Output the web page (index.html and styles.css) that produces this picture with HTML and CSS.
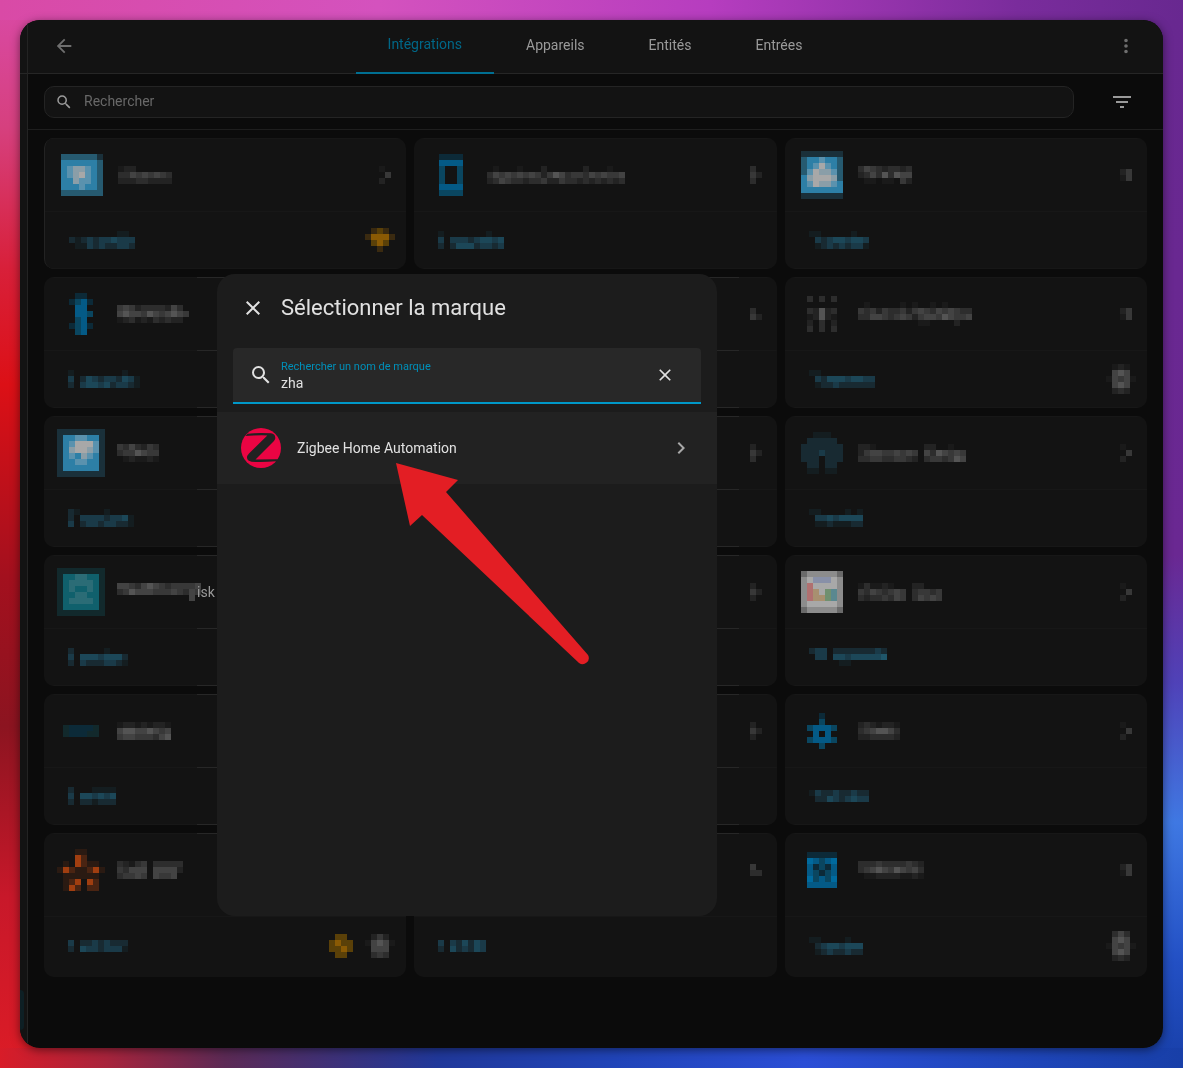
FILE: index.html
```html
<!DOCTYPE html>
<html lang="fr">
<head>
<meta charset="utf-8">
<meta name="viewport" content="width=device-width, initial-scale=1">
<title>Intégrations</title>
<link rel="stylesheet" href="styles.css">
</head>
<body>
<div class="window">
  <aside class="sidebar"><div class="sidebar-head"></div><div class="sidebar-item"></div></aside>
  <div class="content">
    <header class="topbar">
      <button class="icon-button back" type="button"><svg class="icon" viewBox="0 0 24 24"><path d="M20,11V13H8L13.5,18.5L12.08,19.92L4.16,12L12.08,4.08L13.5,5.5L8,11H20Z"/></svg></button>
      <nav class="tabs">
        <a class="tab active" href="#integrations">Intégrations</a>
        <a class="tab" href="#appareils">Appareils</a>
        <a class="tab" href="#entites">Entités</a>
        <a class="tab" href="#entrees">Entrées</a>
      </nav>
      <button class="icon-button menu" type="button"><svg class="icon" viewBox="0 0 24 24"><path d="M12,16A2,2 0 0,1 14,18A2,2 0 0,1 12,20A2,2 0 0,1 10,18A2,2 0 0,1 12,16M12,10A2,2 0 0,1 14,12A2,2 0 0,1 12,14A2,2 0 0,1 10,12A2,2 0 0,1 12,10M12,4A2,2 0 0,1 14,6A2,2 0 0,1 12,8A2,2 0 0,1 10,6A2,2 0 0,1 12,4Z"/></svg></button>
    </header>
    <div class="filterbar">
      <label class="search">
        <svg class="icon small" viewBox="0 0 24 24"><path d="M9.5,3A6.5,6.5 0 0,1 16,9.5C16,11.11 15.41,12.59 14.44,13.73L14.71,14H15.5L20.5,19L19,20.5L14,15.5V14.71L13.73,14.44C12.59,15.41 11.11,16 9.5,16A6.5,6.5 0 0,1 3,9.5A6.5,6.5 0 0,1 9.5,3M9.5,5C7,5 5,7 5,9.5C5,12 7,14 9.5,14C12,14 14,12 14,9.5C14,7 12,5 9.5,5Z"/></svg>
        <input type="search" placeholder="Rechercher">
      </label>
      <button class="icon-button filter" type="button"><svg class="icon" viewBox="0 0 24 24"><path d="M6,13H18V11H6M3,6V8H21V6M10,18H14V16H10V18Z"/></svg></button>
    </div>
    <main class="grid">
      <article class="card left first">
        <div class="card-head"><div class="slot"><svg data-px="oooooon/jjjjjjo/jkllkjo/jklmkjo/jjlkkjo/jjjkjjo/ooooooo"></svg></div><svg data-px="122....../335454543/222332222"></svg><svg class="end" data-px="1./.4/2."></svg></div>
        <div class="card-foot"><svg data-px="........aa./babcbccdccc/.aacbcbbccb"></svg><svg class="end" data-px=".vwv./vxxxv/.wxw./..v.."></svg></div>
      </article>
      <article class="card middle first">
        <div class="card-head"><div class="slot"><svg data-px="ffff/hhhh/g..g/g..g/g..g/hhhh/gggg"></svg></div><svg data-px=".1...1...2......2...1../35454545424653443545445/23543323342243323232323"></svg><svg class="end" data-px="3./42/3."></svg></div>
        <div class="card-foot"><svg data-px="a.......a../c.cccbcddcd/b.bdddbccbc"></svg></div>
      </article>
      <article class="card right">
        <div class="card-head"><div class="slot"><svg data-px="nnnnnnn/ojjkjjo/ojkmkjo/okmllko/jlmmmlo/jkmllkj/jjjjjjj/nnnnnnn"></svg></div><svg data-px="354323323/235363655/.11.11.42"></svg><svg class="end" data-px="24/14"></svg></div>
        <div class="card-foot"><svg data-px="aa.....a../.cbcddcddc/.abcbcbcca"></svg></div>
      </article>

      <article class="card left">
        <div class="card-head"><div class="slot"><svg data-px=".ff./fghf/.hh./.hhg/.gh./fghf/.gh."></svg></div><svg data-px="45423333253/565546545654/12312132322"></svg></div>
        <div class="card-foot"><svg data-px="a........a../c.bdcbccbdca/b.cddcdbccba"></svg></div>
      </article>
      <article class="card middle">
        <div class="card-head"><svg class="end" data-px="3./42"></svg></div>
        <div class="card-foot"></div>
      </article>
      <article class="card right">
        <div class="card-head"><div class="slot"><svg data-px="3.3.3/...../32623/12621/2.3.2/3.3.3"></svg></div><svg data-px=".1.....1.1..1.1..../4342433424543545433/3355434542455465445/..........11....2.."></svg><svg class="end" data-px="24/14"></svg></div>
        <div class="card-foot"><svg data-px="aa........./.cbdddcddcc/.abbcbbbbbb"></svg><svg class="end" data-px=".121./.565./15451/.565./.232."></svg></div>
      </article>

      <article class="card left">
        <div class="card-head"><div class="slot"><svg data-px="nnnnnnnn/njjkkjjn/njkmmmkn/njlmmlkn/njkjlkjn/njjkkjjn/njjjjjjn/nnnnnnnn"></svg></div><svg data-px="4353243/3446544/.121121"></svg></div>
        <div class="card-foot"><svg data-px="ba....a..../b.ccccbccda/c.bccbccbba"></svg></div>
      </article>
      <article class="card middle">
        <div class="card-head"><svg class="end" data-px="2./42/3."></svg></div>
        <div class="card-foot"></div>
      </article>
      <article class="card right">
        <div class="card-head"><div class="slot"><svg data-px="..aaa../.bbbbb./bbbbbbb/bbbcbbb/bbb.bbb/.bb.bb./.aa.aa."></svg></div><svg data-px="221........22..1../2455445454.5365454/3344334432.3443465"></svg><svg class="end" data-px="1./.4/2."></svg></div>
        <div class="card-foot"><svg data-px="aa....a.a/.ccdcdddd/.aabaaabb"></svg></div>
      </article>

      <article class="card left">
        <div class="card-head"><div class="slot"><svg data-px="pppppppp/pqqrrqqp/pqrrrrqp/pqrqqrqp/pqqrrqqp/pqrrrrqp/pqqqqqqp/pppppppp"></svg></div><span class="name"><svg data-px="55435654344445/34655544454354/............5."></svg>isk</span></div>
        <div class="card-foot"><svg data-px="b.....a.../c.dddcdddb/b.cbbbccba"></svg></div>
      </article>
      <article class="card middle">
        <div class="card-head"><svg class="end" data-px="2./42/2."></svg></div>
        <div class="card-foot"></div>
      </article>
      <article class="card right">
        <div class="card-head"><div class="slot"><svg data-px="7888887/8mAAAm8/8Bmmmm8/8BCmDE8/8BCCDE8/8mmmmm8/7888887"></svg></div><svg data-px="131121...22.../43543454.34434/32334354.35454"></svg><svg class="end" data-px="1./.4/2."></svg></div>
        <div class="card-foot"><svg data-px="bcc.bbbbbbbcb/.cc.ddcddddde/.....aa......"></svg></div>
      </article>

      <article class="card left">
        <div class="card-head"><div class="slot"><svg data-px="pffffp/pfffpp"></svg></div><svg data-px="122121221/566556545/455444356"></svg></div>
        <div class="card-foot"><svg data-px="b...aaaa/c.ddcdcd/b.bbabbb"></svg></div>
      </article>
      <article class="card middle">
        <div class="card-head"><svg class="end" data-px="2./42/2."></svg></div>
        <div class="card-foot"></div>
      </article>
      <article class="card right">
        <div class="card-head"><div class="slot"><svg data-px="..f../..g../ghhhg/.h.h./ghhhg/..g.."></svg></div><svg data-px="2321221/3456653/2233332"></svg><svg class="end" data-px="1./.4/2."></svg></div>
        <div class="card-foot"><svg data-px="acbbcbbcbb/.bbdcbcdcc"></svg></div>
      </article>

      <article class="card left last">
        <div class="card-head"><div class="slot"><svg data-px="...ss.../...ut.../.s.utss./sutsstus/.ssssss./.stu.ut./.sut.tt."></svg></div><svg data-px="32134.33333/43555.55552/34454.5445."></svg></div>
        <div class="card-foot"><svg data-px="c.bbcbcbbb/b.dccbccca"></svg><span class="end pair"><svg data-px=".ww./wxww/wwxw/.ww."></svg><svg data-px=".242./15651/.555./.343."></svg></span></div>
      </article>
      <article class="card middle last">
        <div class="card-head"><svg class="end" data-px="4./33"></svg></div>
        <div class="card-foot"><svg data-px="c.cbdbdc/b.dbcbdc"></svg></div>
      </article>
      <article class="card right last">
        <div class="card-head"><div class="slot"><svg data-px="fffff/ihghi/hfgfh/hgfgh/ighgi/hhhhh"></svg></div><svg data-px="33343333432/34565465453/.1122221121"></svg><svg class="end" data-px="24/14"></svg></div>
        <div class="card-foot"><svg data-px="aa....a../.bcddcddd/.abcbbcbb"></svg><svg class="end" data-px=".353./.565./15451/.565./.232."></svg></div>
      </article>
    </main>
  </div>

  <section class="dialog" role="dialog" aria-labelledby="dialog-title">
    <div class="dialog-head">
      <button class="icon-button" type="button"><svg class="icon" viewBox="0 0 24 24"><path d="M19,6.41L17.59,5L12,10.59L6.41,5L5,6.41L10.59,12L5,17.59L6.41,19L12,13.41L17.59,19L19,17.59L13.41,12L19,6.41Z"/></svg></button>
      <h1 id="dialog-title">Sélectionner la marque</h1>
    </div>
    <div class="field">
      <svg class="icon" viewBox="0 0 24 24"><path d="M9.5,3A6.5,6.5 0 0,1 16,9.5C16,11.11 15.41,12.59 14.44,13.73L14.71,14H15.5L20.5,19L19,20.5L14,15.5V14.71L13.73,14.44C12.59,15.41 11.11,16 9.5,16A6.5,6.5 0 0,1 3,9.5A6.5,6.5 0 0,1 9.5,3M9.5,5C7,5 5,7 5,9.5C5,12 7,14 9.5,14C12,14 14,12 14,9.5C14,7 12,5 9.5,5Z"/></svg>
      <div class="field-text">
        <label for="brand">Rechercher un nom de marque</label>
        <input id="brand" type="text" value="zha">
      </div>
      <button class="icon-button" type="button"><svg class="icon clear" viewBox="0 0 24 24"><path d="M19,6.41L17.59,5L12,10.59L6.41,5L5,6.41L10.59,12L5,17.59L6.41,19L12,13.41L17.59,19L19,17.59L13.41,12L19,6.41Z"/></svg></button>
    </div>
    <a class="brand" href="#zha">
      <svg class="logo" viewBox="0 0 40 40"><circle cx="20" cy="20" r="20" fill="#eb0443"/><path fill="#222" d="M6.500 5.700Q17 4.600 30 5.300Q34.500 6 34.300 10.200Q34 12 32.500 13.500L14.500 31.500L37 31.200L35.500 33.200Q22 34.400 10.500 33.700Q6 32.800 6 29.500Q6 27.500 8 25.500L26.300 7.400Q14 7.200 4.500 7.900Z"/></svg>
      <span>Zigbee Home Automation</span>
      <svg class="icon chevron" viewBox="0 0 24 24"><path d="M8.590,16.580L13.170,12L8.590,7.410L10,6L16,12L10,18L8.590,16.580Z"/></svg>
    </a>
  </section>
  <svg class="pointer" viewBox="0 0 200 204"><path fill="#e31e24" d="M0 0L62 17L50 29L192 192A6.200 6.200 0 0 1 183 200L26 52L14 63Z"/></svg>
</div>
<script src="mosaic.js"></script>
</body>
</html>
```
FILE: styles.css
```css
* { box-sizing: border-box; }

body {
  margin: 0;
  min-height: 100vh;
  padding: 20px;
  font-family: Roboto, "Liberation Sans", sans-serif;
  font-size: 14px;
  color: #9a9a9a;
  background:
    linear-gradient(90deg, #d94aa6, #d452be 32%, #b63dbf 60%, #7a2c9c 86%, #682890) top / 100% 20px no-repeat,
    linear-gradient(90deg, #d81c28, #a8243c 9%, #5c2a55 19%, #20389a 37%, #2044b8 52%, #2b4ed6 68%, #2148c0 82%, #183fa8) bottom / 100% 20px no-repeat,
    linear-gradient(#d94aa6, #d6407e 12%, #d8203a 25%, #dc1016 36%, #a3101e 54%, #8c1420 68%, #c8182a 84%, #dc1c26) left / 50% 100% no-repeat,
    linear-gradient(#682890, #6a2892 52%, #4f42b8 64%, #3f78e2 77%, #2350c4 90%, #183fa8) right / 50% 100% no-repeat;
}

button, input { font: inherit; color: inherit; background: none; border: 0; padding: 0; outline: 0; }
a { color: inherit; text-decoration: none; }
svg { display: block; flex: none; }

.window {
  position: relative;
  display: flex;
  min-height: calc(100vh - 40px);
  border-radius: 20px;
  overflow: hidden;
  background: #0b0b0b;
}
body::before {
  content: "";
  position: fixed;
  inset: 20px;
  border-radius: 20px;
  box-shadow: 0 2px 10px rgba(0, 0, 0, .5);
}

.sidebar {
  display: flex;
  flex-direction: column;
  justify-content: space-between;
  width: 8px;
  padding-bottom: 18px;
  background: #131313;
  border-right: 1px solid #232323;
}
.sidebar-head { height: 54px; border-bottom: 1px solid #262626; }
.sidebar-item { width: 4px; height: 40px; background: #0e1f24; border-radius: 0 4px 4px 0; }

.content { flex: 1; min-width: 0; }

.icon { width: 24px; height: 24px; fill: currentColor; }
.icon.small { width: 18px; height: 18px; }
.icon.clear { width: 20px; height: 20px; }
.icon-button { display: grid; place-items: center; flex: none; width: 48px; height: 48px; }

.topbar {
  display: grid;
  grid-template-columns: 1fr auto 1fr;
  align-items: center;
  height: 54px;
  padding: 0 13px 0 12px;
  background: #131313;
  border-bottom: 1px solid #262626;
}
.topbar .icon { width: 22px; height: 22px; }
.topbar .icon-button { height: 52px; padding-bottom: 2px; color: #6e6e6e; }
.menu { justify-self: end; }
.tabs { display: flex; align-self: stretch; }
.tab { display: flex; align-items: center; padding: 0 32px 4px; }
.tab.active { color: #006787; border-bottom: 2px solid #006f92; margin-bottom: -1px; }

.filterbar {
  display: flex;
  align-items: center;
  gap: 24px;
  height: 56px;
  padding: 0 17px 0 16px;
  border-bottom: 1px solid #1e1e1e;
}
.search {
  display: flex;
  flex: 1;
  align-items: center;
  gap: 11px;
  height: 32px;
  padding: 0 10px;
  border: 1px solid #242424;
  border-radius: 10px;
  background: #131313;
}
.search input { flex: 1; min-width: 0; line-height: 20px; padding-bottom: 2px; }
.search input::placeholder { color: #686868; opacity: 1; }

.grid {
  display: grid;
  grid-template-columns: repeat(3, 1fr);
  gap: 8px;
  padding: 8px 16px 70px;
}
.card {
  --line: linear-gradient(#171717, #171717);
  display: flex;
  flex-direction: column;
  border-radius: 10px;
  background: var(--line) top / 100% 1px no-repeat, var(--line) bottom / 100% 1px no-repeat, #131313;
}
.card.left { --line: linear-gradient(90deg, #171717 153px, #272727 0); }
.card.middle { --line: linear-gradient(90deg, #272727 325px, #171717 0); }
.card.first { --line: linear-gradient(#171717, #171717); }
.card.left.first { border-left: 1px solid #232323; }
.card-head {
  display: flex;
  align-items: center;
  gap: 14px;
  height: 74px;
  padding: 0 15px;
  background: var(--line) bottom / 100% 1px no-repeat;
}
.card.last { background: var(--line) top / 100% 1px no-repeat, #131313; }
.card.last .card-head { height: 84px; padding-bottom: 10px; background: none; border-bottom: 1px solid #171717; }
.card-foot { display: flex; align-items: center; height: 57px; padding: 0 11px 2px 24px; }
.card.last .card-foot { height: 60px; }
.slot { display: grid; place-content: center; flex: none; width: 44px; }
.end { margin-left: auto; }
.pair { display: flex; gap: 12px; }
.name { display: flex; align-items: center; white-space: nowrap; }
.name svg { margin-right: -4px; }

.dialog {
  position: absolute;
  left: 197px;
  top: 254px;
  width: 500px;
  height: 642px;
  border-radius: 18px;
  background: #1c1c1c;
  color: #e1e1e1;
}
.dialog-head { display: flex; align-items: center; gap: 4px; height: 74px; padding: 0 12px 6px; }
.dialog-head h1 { margin: 0; font-size: 22px; font-weight: 400; line-height: 28px; }
.field {
  display: flex;
  align-items: center;
  height: 56px;
  margin: 0 16px 8px;
  padding-left: 16px;
  padding-right: 12px;
  border-radius: 4px 4px 0 0;
  border-bottom: 2px solid #0098c8;
  background: #282828;
}
.field-text { display: flex; flex: 1; flex-direction: column; padding-left: 8px; }
.field-text label { font-size: 11px; line-height: 16px; color: #008fb8; }
.field-text input { width: 100%; height: 16px; line-height: 16px; }
.brand { display: flex; align-items: center; gap: 16px; height: 72px; padding: 0 24px; background: #222; }
.logo { width: 40px; height: 40px; }
.chevron { margin-left: auto; color: #a8a8a8; }

.pointer { position: absolute; left: 376px; top: 443px; width: 200px; height: 204px; pointer-events: none; }
```
FILE: mosaic.js
```js
// Draws the censored parts of the cards: one 6px cell per character, rows split by "/".
const CELL = 6;
const COLORS = {
  1: "#1a1a1a", 2: "#232323", 3: "#2d2d2d", 4: "#383838", 5: "#434343", 6: "#545454",
  7: "#6a6a6a", 8: "#8c8c8c",
  a: "#141d20", b: "#182a32", c: "#1a3a48", d: "#1c4758", e: "#1f566a",
  f: "#0c2a38", g: "#0a4660", h: "#045a86", i: "#006a9e",
  j: "#2d7fa6", k: "#5a92ae", l: "#8a9ea8", m: "#a8a8a8", n: "#1a303a", o: "#265a70",
  p: "#12292c", q: "#10606c", r: "#2b6c76",
  s: "#2a1a12", t: "#4a2412", u: "#a03e10",
  v: "#3a2a10", w: "#5a4008", x: "#8a5a04",
  A: "#8890a8", B: "#b07070", C: "#a89070", D: "#709070", E: "#5a8890"
};

document.querySelectorAll("svg[data-px]").forEach((svg) => {
  const rows = svg.dataset.px.split("/");
  const cols = Math.max(...rows.map((row) => row.length));
  svg.setAttribute("width", cols * CELL);
  svg.setAttribute("height", rows.length * CELL);
  svg.setAttribute("shape-rendering", "crispEdges");
  rows.forEach((row, y) => {
    [...row].forEach((key, x) => {
      if (!COLORS[key]) return;
      const rect = document.createElementNS("http://www.w3.org/2000/svg", "rect");
      rect.setAttribute("x", x * CELL);
      rect.setAttribute("y", y * CELL);
      rect.setAttribute("width", CELL);
      rect.setAttribute("height", CELL);
      rect.setAttribute("fill", COLORS[key]);
      svg.append(rect);
    });
  });
});
```
